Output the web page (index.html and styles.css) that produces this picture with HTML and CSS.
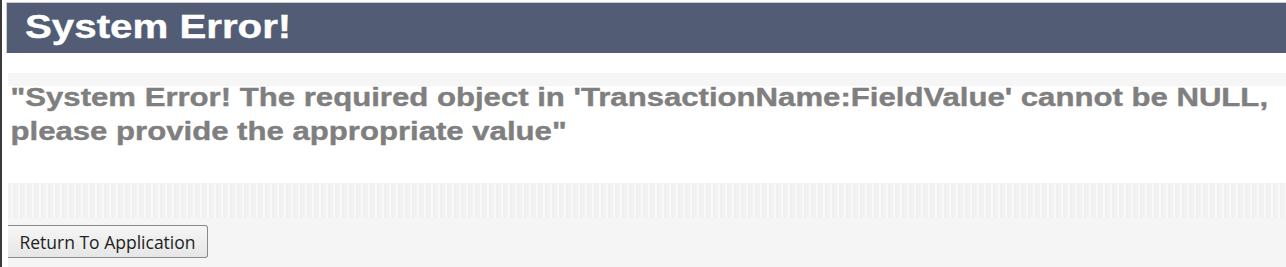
FILE: index.html
```html
<!DOCTYPE html>
<html lang="en">
<head>
  <meta charset="UTF-8" />
  <title>System Error</title>
  <link rel="stylesheet" href="styles.css">
</head>
<body>
  <div class="page">
    <!-- title bar -->
    <div class="title-bar"><span class="wide">System Error!</span></div>

    <div class="message">
      <div class="message-strip"></div>
      <p class="message-text">"System Error! The required object in 'TransactionName:FieldValue' cannot be NULL, please provide the appropriate value"</p>
    </div>

    <div class="footer">
      <div class="footer-strip"></div>
      <div class="actions">
        <button class="return-btn">Return To Application</button>
      </div>
    </div>
  </div>
</body>
</html>
```

FILE: styles.css
```css
* {
  margin: 0;
  padding: 0;
  box-sizing: border-box;
}

html, body {
  height: 100%;
}

body {
  background-color: #fff;
  font-family: "Liberation Sans", Arial, sans-serif;
}

.page {
  height: 100%;
  display: flex;
  flex-direction: column;
  border-left: 2px solid #3a3a3a;
}

.wide {
  display: inline-block;
  transform: scaleX(1.22);
  transform-origin: left center;
}

.title-bar {
  margin: 2px 0 0 4px;
  height: 51px;
  padding-left: 18px;
  background-color: #525c74;
  border-top: 1px solid #c9cdd6;
  border-left: 1px solid #c9cdd6;
  color: #fff;
  font-size: 33px;
  font-weight: bold;
  line-height: 47px;
  -webkit-text-stroke: 0.4px #fff;
}

.message {
  margin-top: 20px;
  padding-left: 6px;
}

.message-strip {
  height: 13px;
  background-color: #f6f6f6;
}

.message-text {
  width: 1030px;
  margin-top: -6px;
  padding-left: 2px;
  transform: scaleX(1.245);
  transform-origin: left top;
  color: #7f7f7f;
  font-size: 25px;
  font-weight: bold;
  line-height: 34px;
  -webkit-text-stroke: 0.4px #7f7f7f;
}

.footer {
  flex: 1;
  margin-top: 35px;
  margin-left: 6px;
  background-color: #f5f5f5;
}

.footer-strip {
  height: 35px;
  background: repeating-linear-gradient(90deg, #f2f2f2 0 3px, #f8f8f8 3px 5px, #f0f0f0 5px 7px);
}

.actions {
  padding-top: 7px;
}

.return-btn {
  width: 200px;
  height: 33px;
  padding-top: 1px;
  font-family: "Open Sans", "Noto Sans", sans-serif;
  font-size: 17.5px;
  color: #222;
  background: linear-gradient(#f6f6f6, #e6e6e6);
  border: 1px solid #8a8a8a;
  border-left: none;
  border-radius: 0 3px 3px 0;
}
```
